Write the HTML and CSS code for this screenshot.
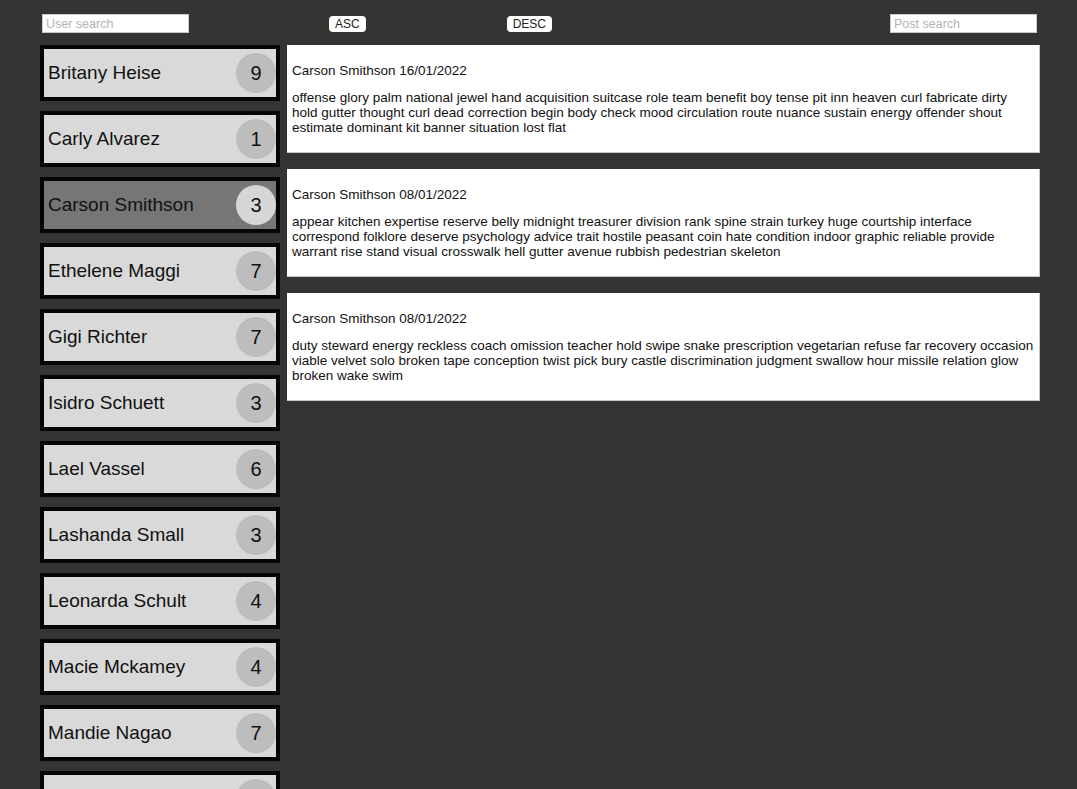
FILE: index.html
```html
<!DOCTYPE html>
<html lang="en">
<head>
<meta charset="utf-8">
<title>Posts</title>
<link rel="stylesheet" href="styles.css">
</head>
<body>
<div class="app">
  <header class="toolbar">
    <input class="search" type="text" placeholder="User search">
    <button class="sort sort-asc">ASC</button>
    <button class="sort sort-desc">DESC</button>
    <input class="search search-post" type="text" placeholder="Post search">
  </header>
  <main class="content">
    <ul class="users">
      <li class="user"><span class="user-name">Britany Heise</span><span class="count">9</span></li>
      <li class="user"><span class="user-name">Carly Alvarez</span><span class="count">1</span></li>
      <li class="user user-active"><span class="user-name">Carson Smithson</span><span class="count">3</span></li>
      <li class="user"><span class="user-name">Ethelene Maggi</span><span class="count">7</span></li>
      <li class="user"><span class="user-name">Gigi Richter</span><span class="count">7</span></li>
      <li class="user"><span class="user-name">Isidro Schuett</span><span class="count">3</span></li>
      <li class="user"><span class="user-name">Lael Vassel</span><span class="count">6</span></li>
      <li class="user"><span class="user-name">Lashanda Small</span><span class="count">3</span></li>
      <li class="user"><span class="user-name">Leonarda Schult</span><span class="count">4</span></li>
      <li class="user"><span class="user-name">Macie Mckamey</span><span class="count">4</span></li>
      <li class="user"><span class="user-name">Mandie Nagao</span><span class="count">7</span></li>
      <li class="user"><span class="user-name">Nydia Croff</span><span class="count">5</span></li>
    </ul>
    <section class="posts">
      <article class="post">
        <p class="post-title">Carson Smithson 16/01/2022</p>
        <p class="post-body">offense glory palm national jewel hand acquisition suitcase role team benefit boy tense pit inn heaven curl fabricate dirty hold gutter thought curl dead correction begin body check mood circulation route nuance sustain energy offender shout estimate dominant kit banner situation lost flat</p>
      </article>
      <article class="post">
        <p class="post-title">Carson Smithson 08/01/2022</p>
        <p class="post-body">appear kitchen expertise reserve belly midnight treasurer division rank spine strain turkey huge courtship interface correspond folklore deserve psychology advice trait hostile peasant coin hate condition indoor graphic reliable provide warrant rise stand visual crosswalk hell gutter avenue rubbish pedestrian skeleton</p>
      </article>
      <article class="post">
        <p class="post-title">Carson Smithson 08/01/2022</p>
        <p class="post-body">duty steward energy reckless coach omission teacher hold swipe snake prescription vegetarian refuse far recovery occasion viable velvet solo broken tape conception twist pick bury castle discrimination judgment swallow hour missile relation glow broken wake swim</p>
      </article>
    </section>
  </main>
</div>
</body>
</html>
```

FILE: styles.css
```css
html, body {
  margin: 0;
  padding: 0;
  height: 100%;
  overflow: hidden;
  background: #343532;
  font-family: "Liberation Sans", Arial, Helvetica, sans-serif;
  color: #111;
}

.app {
  display: flex;
  flex-direction: column;
  height: 100vh;
}

.toolbar {
  display: flex;
  align-items: center;
  padding: 14px 40px 0 42px;
  height: 19px;
}

.search {
  box-sizing: border-box;
  width: 147px;
  height: 19px;
  margin: 0;
  padding: 0 3px;
  border: 1px solid #c9c9c9;
  background: #fff;
  font-family: inherit;
  font-size: 12.5px;
  color: #333;
  outline: none;
}

.search::placeholder {
  color: #b3b3b3;
}

.search-post {
  margin-left: auto;
}

.sort {
  box-sizing: border-box;
  height: 16px;
  margin: 0;
  padding: 0 6px;
  border: none;
  border-radius: 4px;
  background: #fff;
  font-family: inherit;
  font-size: 12px;
  line-height: 16px;
  color: #222;
}

.sort-asc {
  margin-left: 140px;
}

.sort-desc {
  margin-left: 141px;
}

.content {
  display: flex;
  align-items: flex-start;
  gap: 7px;
  padding: 12px 37px 0 40px;
  flex: 1;
  min-height: 0;
}

.users {
  list-style: none;
  margin: 0;
  padding: 0;
  width: 240px;
  flex: none;
}

.user {
  box-sizing: border-box;
  display: flex;
  align-items: center;
  justify-content: space-between;
  height: 56px;
  margin-bottom: 10px;
  border: 4px solid #050505;
  background: #d9d9d9;
  padding-left: 4px;
  font-size: 19px;
}

.user-active {
  background: #767676;
}

.count {
  display: flex;
  align-items: center;
  justify-content: center;
  width: 40px;
  height: 40px;
  border-radius: 50%;
  background: #bdbdbd;
  font-size: 20px;
}

.user-active .count {
  background: #d6d6d6;
}

.posts {
  flex: 1;
  min-width: 0;
}

.post {
  box-sizing: border-box;
  height: 108px;
  margin-bottom: 16px;
  padding: 5px 4px 5px 5px;
  background: #fff;
  border-right: 1px solid #c8c8c8;
  border-bottom: 1px solid #c8c8c8;
  font-size: 13.5px;
}

.post-title {
  margin: 13px 0 11px;
  line-height: 16px;
}

.post-body {
  margin: 0;
  line-height: 15px;
}
```
